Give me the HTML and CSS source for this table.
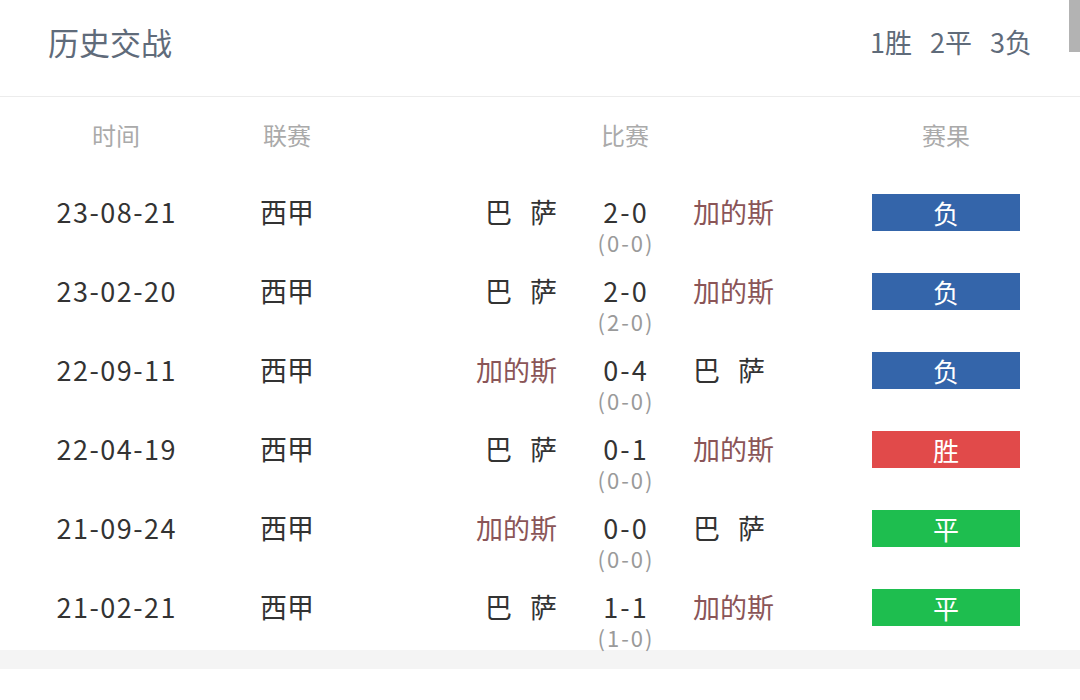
FILE: index.html
```html
<!DOCTYPE html>
<html lang="zh-CN">
<head>
<meta charset="utf-8">
<title>历史交战</title>
<link rel="stylesheet" href="styles.css">
</head>
<body>
<div class="page">
  <header class="top">
    <h1 class="title">历史交战</h1>
    <div class="summary"><span>1胜</span><span>2平</span><span>3负</span></div>
    <div class="scroll-thumb"></div>
  </header>
  <section class="table">
    <div class="row head">
      <div class="c-date">时间</div>
      <div class="c-league">联赛</div>
      <div class="c-home"></div>
      <div class="c-score"><div class="main">比赛</div></div>
      <div class="c-away"></div>
      <div class="c-res">赛果</div>
    </div>

    <div class="row">
      <div class="c-date">23-08-21</div>
      <div class="c-league">西甲</div>
      <div class="c-home team bs">巴 萨</div>
      <div class="c-score"><div class="main">2-0</div><div class="ht">(0-0)</div></div>
      <div class="c-away team cd">加的斯</div>
      <div class="c-res"><span class="badge lose">负</span></div>
    </div>

    <div class="row">
      <div class="c-date">23-02-20</div>
      <div class="c-league">西甲</div>
      <div class="c-home team bs">巴 萨</div>
      <div class="c-score"><div class="main">2-0</div><div class="ht">(2-0)</div></div>
      <div class="c-away team cd">加的斯</div>
      <div class="c-res"><span class="badge lose">负</span></div>
    </div>

    <div class="row">
      <div class="c-date">22-09-11</div>
      <div class="c-league">西甲</div>
      <div class="c-home team cd">加的斯</div>
      <div class="c-score"><div class="main">0-4</div><div class="ht">(0-0)</div></div>
      <div class="c-away team bs">巴 萨</div>
      <div class="c-res"><span class="badge lose">负</span></div>
    </div>

    <div class="row">
      <div class="c-date">22-04-19</div>
      <div class="c-league">西甲</div>
      <div class="c-home team bs">巴 萨</div>
      <div class="c-score"><div class="main">0-1</div><div class="ht">(0-0)</div></div>
      <div class="c-away team cd">加的斯</div>
      <div class="c-res"><span class="badge win">胜</span></div>
    </div>

    <div class="row">
      <div class="c-date">21-09-24</div>
      <div class="c-league">西甲</div>
      <div class="c-home team cd">加的斯</div>
      <div class="c-score"><div class="main">0-0</div><div class="ht">(0-0)</div></div>
      <div class="c-away team bs">巴 萨</div>
      <div class="c-res"><span class="badge draw">平</span></div>
    </div>

    <div class="row">
      <div class="c-date">21-02-21</div>
      <div class="c-league">西甲</div>
      <div class="c-home team bs">巴 萨</div>
      <div class="c-score"><div class="main">1-1</div><div class="ht">(1-0)</div></div>
      <div class="c-away team cd">加的斯</div>
      <div class="c-res"><span class="badge draw">平</span></div>
    </div>
  </section>
  <div class="band"></div>
</div>
</body>
</html>
```

FILE: styles.css
```css
html, body {
  margin: 0;
  padding: 0;
  background: #fff;
}
body {
  font-family: "Noto Sans CJK SC", "Noto Sans", sans-serif;
  color: #333;
  width: 1080px;
  height: 700px;
  overflow: hidden;
}
.page {
  position: relative;
}
.top {
  display: flex;
  align-items: center;
  justify-content: space-between;
  padding: 0 48px 13px 48px;
  height: 83px;
  border-bottom: 1px solid #ececec;
}
.title {
  margin: 0;
  font-size: 31px;
  font-weight: 400;
  color: #5f6b7a;
  line-height: 40px;
}
.summary {
  display: flex;
  gap: 18px;
  font-size: 27px;
  color: #5f6b7a;
  line-height: 36px;
}
.scroll-thumb {
  position: absolute;
  right: 0;
  top: 0;
  width: 11px;
  height: 52px;
  background: #b3b3b3;
}
.table {
  display: flex;
  flex-direction: column;
  gap: 20px;
  padding-top: 21px;
}
.row {
  display: grid;
  grid-template-columns: 232px 110px 215px 136px 179px 148px;
  align-items: start;
}
.row.head {
  color: #aaa;
  font-size: 24px;
  line-height: 34px;
  margin-bottom: 22px;
}
.row.head .main {
  font-size: 24px;
  line-height: 34px;
  color: #aaa;
  letter-spacing: 0;
  padding-left: 0;
}
.c-date, .c-league, .c-score, .c-res {
  text-align: center;
}
.row:not(.head) .c-date {
  font-size: 27px;
  line-height: 35px;
  letter-spacing: 1.5px;
  padding-left: 1.5px;
  color: #333;
}
.row:not(.head) .c-league {
  font-size: 27px;
  line-height: 35px;
  color: #333;
}
.c-home {
  text-align: right;
}
.c-away {
  text-align: left;
}
.team {
  font-size: 27px;
  line-height: 35px;
}
.team.bs {
  color: #333;
  word-spacing: 12px;
}
.team.cd {
  color: #8a5557;
}
.main {
  font-size: 27px;
  line-height: 35px;
  letter-spacing: 2px;
  padding-left: 2px;
  color: #333;
}
.ht {
  margin-top: 2px;
  font-size: 22px;
  line-height: 22px;
  letter-spacing: 2px;
  padding-left: 2px;
  color: #9a9a9a;
}
.badge {
  display: block;
  width: 148px;
  height: 37px;
  line-height: 37px;
  color: #fff;
  font-size: 26px;
  text-align: center;
}
.badge.lose {
  background: #3465aa;
}
.badge.win {
  background: #e14a4a;
}
.badge.draw {
  background: #1ebe4f;
}
.band {
  margin-top: 2px;
  height: 19px;
  background: #f4f4f4;
}
```
